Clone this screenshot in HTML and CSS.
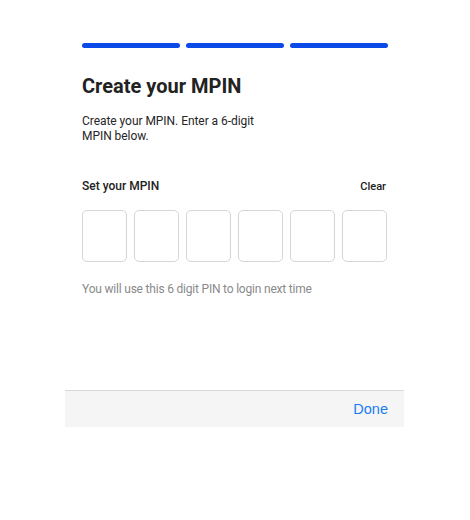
FILE: index.html
```html
<!DOCTYPE html>
<html>
<head>
<meta charset="utf-8">
<link rel="stylesheet" href="styles.css">
</head>
<body>
<div class="screen">
  <div class="content">
    <div class="progress">
      <span class="bar"></span><span class="bar"></span><span class="bar"></span>
    </div>
    <h1 class="title">Create your MPIN</h1>
    <p class="subtitle">Create your MPIN. Enter a 6-digit MPIN below.</p>
    <div class="pin-head">
      <span class="pin-label">Set your MPIN</span>
      <span class="clear">Clear</span>
    </div>
    <div class="pins">
      <div class="pin"></div><div class="pin"></div><div class="pin"></div>
      <div class="pin"></div><div class="pin"></div><div class="pin"></div>
    </div>
    <p class="hint">You will use this 6 digit PIN to login next time</p>
  </div>
  <div class="toolbar">
    <span class="done">Done</span>
  </div>
</div>
</body>
</html>
```
FILE: styles.css
```css
* { box-sizing: border-box; }
html, body { margin: 0; padding: 0; background: #fff; }
body { font-family: "Roboto", "Inter", sans-serif; color: #222; }
.screen { width: 470px; height: 520px; }
.content { width: 306px; margin-left: 82px; padding-top: 43px; }
.progress { display: flex; gap: 6px; }
.bar { flex: 1; height: 5px; border-radius: 3px; background: #0a4be8; }
.title { margin: 26px 0 0; font-size: 20px; font-weight: 700; line-height: 24px; color: #222; }
.subtitle { margin: 16px 0 0; width: 185px; font-size: 12px; line-height: 15px; letter-spacing: -0.05px; color: #262626; }
.pin-head { display: flex; justify-content: space-between; align-items: baseline; margin-top: 35px; line-height: 15px; }
.pin-label { font-size: 12px; font-weight: 500; }
.clear { font-size: 11px; font-weight: 500; margin-right: 2px; }
.pins { display: flex; gap: 7px; margin-top: 16px; }
.pin { width: 45px; height: 52px; border: 1px solid #d6d6d6; border-radius: 5px; }
.hint { margin: 20px 0 0; font-size: 12px; line-height: 15px; letter-spacing: -0.2px; color: #8a8a8a; }
.toolbar { margin: 93px 0 0 65px; width: 339px; height: 37px; background: #f5f5f5; border-top: 1px solid #d9d9d9; display: flex; align-items: center; justify-content: flex-end; padding-right: 16px; }
.done { font-family: "Liberation Sans", Arial, sans-serif; font-size: 14.5px; color: #1a7cf5; }
```
